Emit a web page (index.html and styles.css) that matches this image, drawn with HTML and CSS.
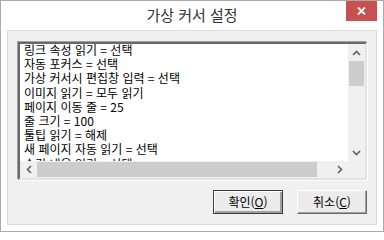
FILE: index.html
```html
<!DOCTYPE html>
<html lang="ko">
<head>
<meta charset="utf-8">
<title>가상 커서 설정</title>
<link rel="stylesheet" href="styles.css">
</head>
<body>
<div class="window">
  <div class="titlebar">
    <div class="title">가상 커서 설정</div>
    <div class="close">
      <svg width="9" height="8" viewBox="0 0 9 8"><path d="M1 0.5 L8 7.5 M8 0.5 L1 7.5" stroke="#fff" stroke-width="1.8" fill="none"/></svg>
    </div>
  </div>
  <div class="panel">
    <div class="listbox">
      <div class="items">
        <div class="item">링크 속성 읽기 = 선택</div>
        <div class="item">자동 포커스 = 선택</div>
        <div class="item">가상 커서시 편집창 입력 = 선택</div>
        <div class="item">이미지 읽기 = 모두 읽기</div>
        <div class="item">페이지 이동 줄 = 25</div>
        <div class="item">줄 크기 = 100</div>
        <div class="item">툴팁 읽기 = 해제</div>
        <div class="item">새 페이지 자동 읽기 = 선택</div>
        <div class="item">숨김 내용 읽기 = 선택</div>
        <div class="item">표 읽기 = 선택</div>
      </div>
      <div class="vscroll">
        <div class="sb-btn"><svg width="9" height="6" viewBox="0 0 9 6"><path d="M1 5 L4.5 1.5 L8 5" stroke="#606060" stroke-width="1.6" fill="none"/></svg></div>
        <div class="vthumb"></div>
        <div class="vtrack"></div>
        <div class="sb-btn"><svg width="9" height="6" viewBox="0 0 9 6"><path d="M1 1 L4.5 4.5 L8 1" stroke="#606060" stroke-width="1.6" fill="none"/></svg></div>
      </div>
      <div class="hscroll">
        <div class="sb-btn"><svg width="6" height="9" viewBox="0 0 6 9"><path d="M5 1 L1.5 4.5 L5 8" stroke="#606060" stroke-width="1.6" fill="none"/></svg></div>
        <div class="hthumb"></div>
        <div class="htrack"></div>
        <div class="sb-btn"><svg width="6" height="9" viewBox="0 0 6 9"><path d="M1 1 L4.5 4.5 L1 8" stroke="#606060" stroke-width="1.6" fill="none"/></svg></div>
      </div>
      <div class="corner"></div>
    </div>
    <div class="buttons">
      <div class="btn default">확인(<u>O</u>)</div>
      <div class="btn">취소(<u>C</u>)</div>
    </div>
  </div>
</div>
</body>
</html>
```
FILE: styles.css
```css
html, body {
  margin: 0;
  padding: 0;
  background: #fff;
}
.window {
  width: 384px;
  height: 232px;
  box-sizing: border-box;
  border: 1px solid #aaaaaa;
  background: #ffffff;
  display: flex;
  flex-direction: column;
  font-family: "Noto Sans CJK KR", "Noto Sans", sans-serif;
}
.titlebar {
  height: 29px;
  display: grid;
  grid-template-columns: 1fr auto 1fr;
}
.title {
  grid-column: 2;
  font-size: 15px;
  line-height: 27px;
  color: #333333;
}
.close {
  grid-column: 3;
  justify-self: end;
  align-self: start;
  width: 31px;
  height: 20px;
  margin-right: 6px;
  background: #c75050;
  display: flex;
  align-items: center;
  justify-content: center;
}
.panel {
  flex: 1;
  margin: 0 6px 6px 6px;
  border: 1px solid #dadada;
  background: #f0f0f0;
  padding: 11px 9px 0 10px;
  display: flex;
  flex-direction: column;
}
.listbox {
  height: 138px;
  box-sizing: border-box;
  border-style: solid;
  border-width: 2px;
  border-color: #696969 #e3e3e3 #e3e3e3 #696969;
  box-shadow: -1px -1px 0 #a0a0a0, 1px 1px 0 #ffffff;
  background: #ffffff;
  display: grid;
  grid-template-columns: 1fr 17px;
  grid-template-rows: 1fr 17px;
  overflow: hidden;
}
.items {
  grid-column: 1;
  grid-row: 1;
  overflow: hidden;
  padding: 0 0 0 4px;
  font-size: 12px;
  line-height: 14.2px;
  color: #000;
  white-space: nowrap;
}
.item {
  position: relative;
  top: -1px;
}
.vscroll {
  grid-column: 2;
  grid-row: 1;
  display: flex;
  flex-direction: column;
  background: #f0f0f0;
}
.hscroll {
  grid-column: 1;
  grid-row: 2;
  display: flex;
  background: #f0f0f0;
}
.corner {
  grid-column: 2;
  grid-row: 2;
  background: #f0f0f0;
}
.sb-btn {
  width: 17px;
  height: 17px;
  flex: none;
  display: flex;
  align-items: center;
  justify-content: center;
}
.vthumb {
  height: 25px;
  margin: 0 1px;
  background: #cdcdcd;
}
.vtrack { flex: 1; }
.hthumb {
  width: 280px;
  margin: 1px 0;
  background: #cdcdcd;
}
.htrack { flex: 1; }
.buttons {
  margin-top: 10px;
  display: flex;
  justify-content: flex-end;
  gap: 14px;
}
.btn {
  width: 70px;
  height: 24px;
  box-sizing: border-box;
  background: #ececec;
  border-style: solid;
  border-width: 1px;
  border-color: #ffffff #696969 #696969 #ffffff;
  box-shadow: inset -1px -1px 0 #a0a0a0;
  font-size: 12px;
  line-height: 22px;
  text-align: center;
  color: #000;
}
.btn u {
  text-underline-offset: 1px;
}
.btn.default {
  border: 1px solid #3c3c3c;
  box-shadow: inset 1px 1px 0 #ffffff, inset -2px -2px 0 #a0a0a0;
}
```
